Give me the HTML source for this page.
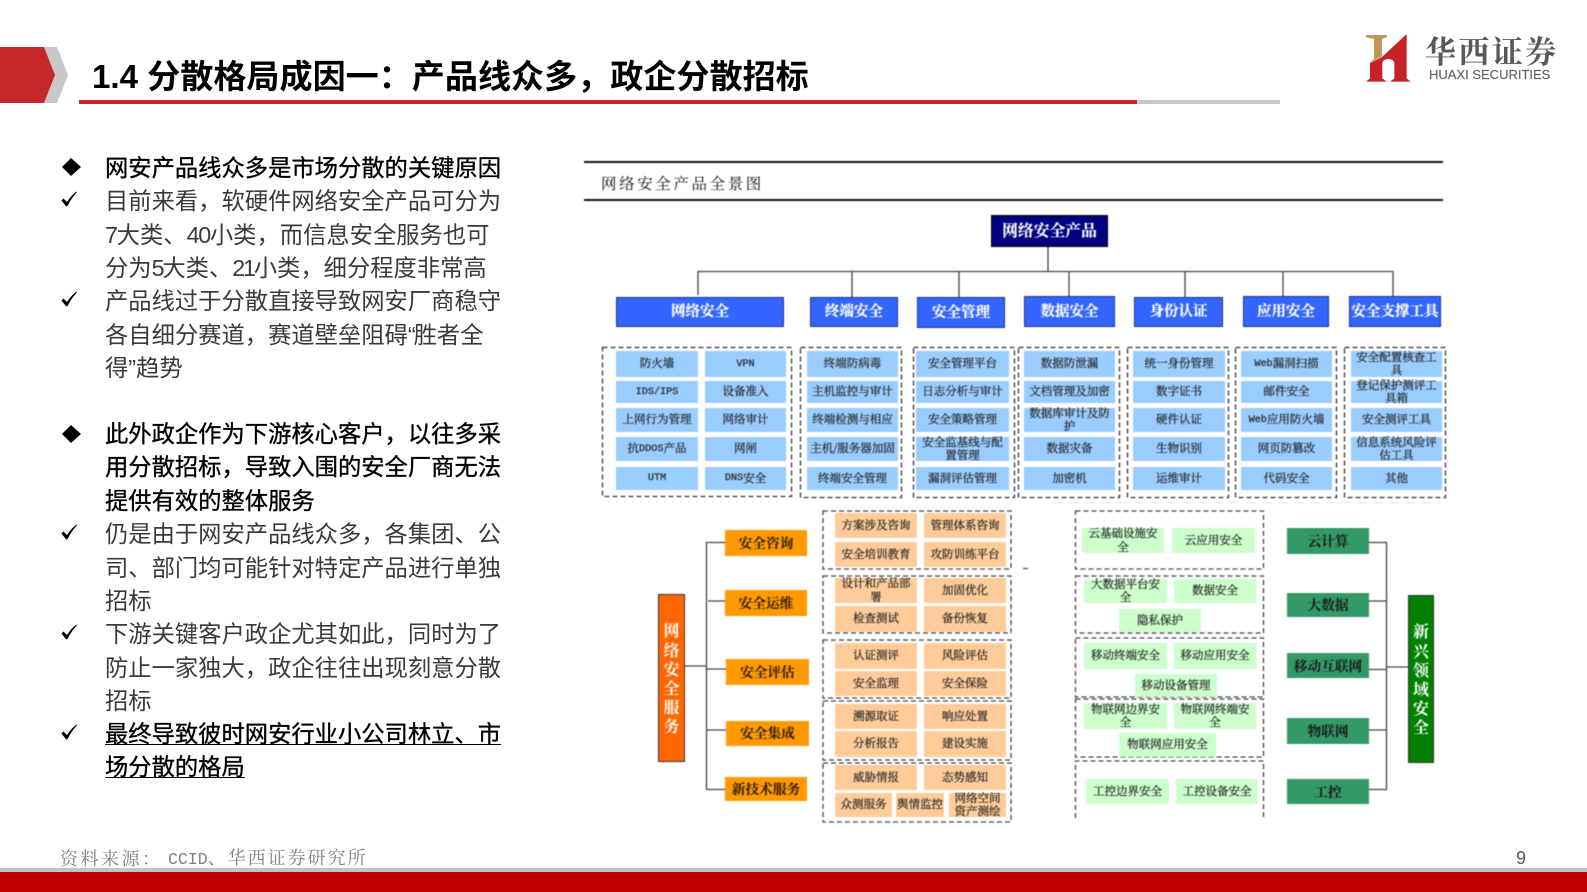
<!DOCTYPE html>
<html lang="zh-CN"><head><meta charset="utf-8"><title>1.4 分散格局成因一</title>
<style>
html,body{margin:0;padding:0;background:#fff}
#p{position:relative;width:1587px;height:892px;overflow:hidden;background:#fff;font-family:"Liberation Sans","Noto Sans CJK SC",sans-serif}
.a{position:absolute}
.l{position:absolute;left:105px;font-size:23.3px;line-height:33px;height:33px;white-space:nowrap;color:#3a3a3a}
.b{color:#000;-webkit-text-stroke:.35px #000}
#d{position:absolute;left:0;top:0;width:1587px;height:892px;filter:blur(.45px);font-family:"Liberation Mono","Noto Serif CJK SC",serif}
.c{position:absolute;display:flex;align-items:center;justify-content:center;text-align:center;font-size:11.5px;line-height:13.4px;color:#2a2a2a;-webkit-text-stroke:.25px #2a2a2a;white-space:nowrap;font-family:"Noto Serif CJK SC",serif}
.c i{font-style:normal;font-size:10.2px;font-family:"Liberation Mono",monospace;margin-top:1px}
.bl{background:#99ccff}.or{background:#ffcc99}.gr{background:#ccffcc}
.h{background:#3366ff;border:1px solid #1c2f8f;box-sizing:border-box;color:#fff;font-size:14.5px;font-weight:bold;-webkit-text-stroke:.2px #fff}
.o{background:#ff9900;font-size:13.7px;color:#2e2008;font-weight:bold;-webkit-text-stroke:.1px #2e2008}
.g{background:#339966;font-size:13.7px;color:#1c1c1c;font-weight:bold;-webkit-text-stroke:.1px #1c1c1c}
.v{color:#fff;font-size:16px;line-height:19.2px;white-space:normal;font-weight:bold;-webkit-text-stroke:0;box-sizing:border-box;border:1px solid #333}
.r1{top:351px;height:26px}.r2{top:381px;height:22px}.r3{top:408px;height:24px}.r4{top:437px;height:24px}.r5{top:467px;height:23px}
.c1{left:616px;width:82px}.c2{left:705px;width:81px}.c3{left:807px;width:91px}.c4{left:916px;width:93px}.c5{left:1024px;width:91px}.c6{left:1133px;width:92px}.c7{left:1241px;width:91px}.c8{left:1351px;width:91px}
.la{left:835px;width:82px}.lb{left:924px;width:82px}
.gdark{left:1287px;width:82px}
.d1{letter-spacing:-1.3px}.d2{letter-spacing:-2.2px}.q{letter-spacing:-2px}
</style></head><body><div id="p">

<!-- header -->
<svg class="a" style="left:0;top:0" width="1587" height="892">
<polygon points="44,47 57,47 68,75 57,103 44,103 55,75" fill="#c8c8c8"/>
<polygon points="0,47 44,47 55,75 44,103 0,103" fill="#c4282a"/>
<rect x="1137" y="100" width="143" height="4" fill="#c8c8c8"/>
<rect x="79" y="100" width="1058" height="4" fill="#c9272b"/>
<!-- bullets -->
<polygon points="71,158 81,167 71,176 62,167" fill="#000"/>
<polygon points="71,425 81,434 71,443 62,434" fill="#000"/>
<g fill="#000">
<path d="M61.5 200.5 L63.5 198.5 L67 202 C69.5 198 72.5 194.500 76.500 191.500 L77 192.300 C73 196.500 70 201 67.500 206.200 L66 206.200 Z"/>
<path d="M61.5 300.500 L63.5 298.500 L67 302 C69.500 298 72.500 294.500 76.500 291.500 L77 292.300 C73 296.500 70 301 67.500 306.200 L66 306.200 Z"/>
<path d="M61.5 533.500 L63.5 531.500 L67 535 C69.500 531 72.500 527.500 76.500 524.500 L77 525.300 C73 529.500 70 534 67.500 539.200 L66 539.200 Z"/>
<path d="M61.5 633.500 L63.5 631.500 L67 635 C69.500 631 72.500 627.500 76.500 624.500 L77 625.300 C73 629.500 70 634 67.500 639.200 L66 639.200 Z"/>
<path d="M61.5 733.500 L63.5 731.500 L67 735 C69.500 731 72.500 727.500 76.500 724.500 L77 725.300 C73 729.500 70 734 67.500 739.200 L66 739.200 Z"/>
</g>
<!-- footer -->
<rect x="0" y="868" width="1587" height="4" fill="#c4c4c4"/>
<rect x="0" y="872" width="1587" height="20" fill="#c00000"/>
</svg>

<div class="a" style="left:92px;top:56px;font-size:33.1px;line-height:44px;font-weight:bold;color:#000;white-space:nowrap">1.4 分散格局成因一：产品线众多，政企分散招标</div>

<!-- logo -->
<svg class="a" style="left:1150px;top:0" width="437" height="130" viewBox="0 0 1311 390">
<path d="M648 105 H711 V111 L696 117 V169 L660 188 L672 176 V117 L648 112 Z" fill="#bd9a5b"/>
<path d="M770 102 L696 171 L660 189 V235 L648 245 H710 L697 235 V192 Q697 177 715 177 Q733 177 733 192 V235 L720 245 H782 L770 235 Z" fill="#c52328"/>
</svg>
<div class="a" style="left:1425px;top:31px;font-size:31px;line-height:38px;letter-spacing:2.4px;color:#595959;font-weight:bold;white-space:nowrap;font-family:'Noto Serif CJK SC',serif;filter:blur(.3px)">华西证券</div>
<div class="a" style="left:1429px;top:67px;font-size:13px;line-height:16px;letter-spacing:0;color:#666;white-space:nowrap;-webkit-text-stroke:.2px #666">HUAXI SECURITIES</div>

<!-- body text -->
<div class="l b" style="top:152px">网安产品线众多是市场分散的关键原因</div>
<div class="l" style="top:185px">目前来看，软硬件网络安全产品可分为</div>
<div class="l" style="top:219px"><span class="d1">7</span>大类、<span class="d1">40</span>小类，而信息安全服务也可</div>
<div class="l" style="top:252px">分为<span class="d2">5</span>大类、<span class="d2">21</span>小类，细分程度非常高</div>
<div class="l" style="top:285px">产品线过于分散直接导致网安厂商稳守</div>
<div class="l" style="top:319px">各自细分赛道，赛道壁垒阻碍<span class="q">“</span>胜者全</div>
<div class="l" style="top:352px">得”趋势</div>
<div class="l b" style="top:418px">此外政企作为下游核心客户，以往多采</div>
<div class="l b" style="top:451px">用分散招标，导致入围的安全厂商无法</div>
<div class="l b" style="top:485px">提供有效的整体服务</div>
<div class="l" style="top:518px">仍是由于网安产品线众多，各集团、公</div>
<div class="l" style="top:552px">司、部门均可能针对特定产品进行单独</div>
<div class="l" style="top:585px">招标</div>
<div class="l" style="top:618px">下游关键客户政企尤其如此，同时为了</div>
<div class="l" style="top:652px">防止一家独大，政企往往出现刻意分散</div>
<div class="l" style="top:685px">招标</div>
<div class="l b" style="top:718px;text-decoration:underline;text-underline-offset:2px;text-decoration-thickness:1px">最终导致彼时网安行业小公司林立、市</div>
<div class="l b" style="top:751px;text-decoration:underline;text-underline-offset:2px;text-decoration-thickness:1px">场分散的格局</div>

<!-- footer text -->
<div class="a" style="left:60px;top:846px;font-family:'Noto Serif CJK SC',serif;font-size:18px;line-height:24px;letter-spacing:2.5px;color:#7f7f7f;white-space:nowrap">资料来源：</div>
<div class="a" style="left:168px;top:848px;font-family:'Liberation Mono','Noto Serif CJK SC',serif;font-size:16.500px;line-height:24px;color:#7f7f7f;white-space:nowrap">CCID<span style="font-size:18px;letter-spacing:2px">、华西证券研究所</span></div>
<div class="a" style="left:1516px;top:847px;font-size:18px;line-height:22px;color:#595959">9</div>

<!-- diagram -->
<div id="d">
<svg class="a" style="left:0;top:0" width="1587" height="892" fill="none">
<rect x="584" y="161" width="859" height="2" fill="#111"/>
<rect x="584" y="199" width="859" height="2" fill="#111"/>
<g stroke="#444" stroke-width="1.300">
<path d="M1048 247V272M698 295V271.500H1393V296M852 272V297M959 272V297M1069 272V296M1185 272V297M1283 272V296"/>
</g>
<g stroke="#333" stroke-width="1.300" stroke-dasharray="5 3">
<rect x="602.500" y="347.500" width="189" height="149"/>
<rect x="800.500" y="347.500" width="101" height="150"/>
<rect x="913.500" y="347.500" width="101" height="150"/>
<rect x="1018.500" y="347.500" width="101" height="150"/>
<rect x="1127.500" y="347.500" width="101" height="150"/>
<rect x="1235.500" y="347.500" width="101" height="150"/>
<rect x="1344.500" y="347.500" width="101" height="150"/>
</g>
<g stroke="#444" stroke-width="1.300" stroke-dasharray="5 3">
<rect x="823" y="511" width="188" height="58"/>
<rect x="823" y="576" width="188" height="57"/>
<rect x="823" y="640" width="188" height="58"/>
<rect x="823" y="701" width="188" height="59"/>
<rect x="823" y="763" width="188" height="59"/>
<rect x="1075.500" y="511" width="188" height="58"/>
<rect x="1075.500" y="576" width="188" height="57"/>
<rect x="1075.500" y="638" width="188" height="59"/>
<rect x="1075.500" y="699" width="188" height="58"/>
<path d="M1075.500 818V761H1263.500V818"/>
</g>
<path d="M1054 502.500H1440" stroke="#fbdcdc" stroke-width="1.200" stroke-dasharray="9 7"/>
<path d="M1023 568.500H1028" stroke="#555" stroke-width="1.300"/>
<g stroke="#444" stroke-width="1.300">
<path d="M726 542.500H706.500V789.500H726M708 601H725M706 669H726M706 730H726M685 666H706"/>
<path d="M1367 542.500H1386.500V789.500H1367M1369 601H1386M1367 669.500H1387M1369 730H1387M1387 667H1408"/>
</g>
</svg>

<div class="a" style="left:601px;top:171px;font-family:'Noto Serif CJK SC',serif;font-size:15.500px;line-height:24px;letter-spacing:2.600px;color:#111;white-space:nowrap">网络安全产品全景图</div>

<div class="c" style="left:991px;top:215px;width:117px;height:32px;background:#000080;border:1px solid #000;box-sizing:border-box;color:#fff;font-size:15.800px;font-weight:bold;-webkit-text-stroke:.15px #fff;padding-bottom:2px">网络安全产品</div>

<div class="c h" style="left:616px;top:297px;width:168px;height:30px;padding-bottom:2px">网络安全</div>
<div class="c h" style="left:810px;top:297px;width:88px;height:30px;padding-bottom:2px">终端安全</div>
<div class="c h" style="left:917px;top:297px;width:88px;height:31px;padding-bottom:1px">安全管理</div>
<div class="c h" style="left:1024px;top:296px;width:91px;height:31px;padding-bottom:2px">数据安全</div>
<div class="c h" style="left:1134px;top:297px;width:89px;height:30px;padding-bottom:2px">身份认证</div>
<div class="c h" style="left:1243px;top:296px;width:86px;height:31px;padding-bottom:2px">应用安全</div>
<div class="c h" style="left:1349px;top:296px;width:92px;height:31px;padding-bottom:2px">安全支撑工具</div>

<div class="c bl c1 r1">防火墙</div><div class="c bl c2 r1"><i>VPN</i></div>
<div class="c bl c1 r2"><i>IDS/IPS</i></div><div class="c bl c2 r2">设备准入</div>
<div class="c bl c1 r3">上网行为管理</div><div class="c bl c2 r3">网络审计</div>
<div class="c bl c1 r4">抗<i>DDOS</i>产品</div><div class="c bl c2 r4">网闸</div>
<div class="c bl c1 r5"><i>UTM</i></div><div class="c bl c2 r5"><i>DNS</i>安全</div>

<div class="c bl c3 r1">终端防病毒</div><div class="c bl c3 r2">主机监控与审计</div><div class="c bl c3 r3">终端检测与相应</div><div class="c bl c3 r4">主机/服务器加固</div><div class="c bl c3 r5">终端安全管理</div>
<div class="c bl c4 r1">安全管理平台</div><div class="c bl c4 r2">日志分析与审计</div><div class="c bl c4 r3">安全策略管理</div><div class="c bl c4 r4">安全监基线与配<br>置管理</div><div class="c bl c4 r5">漏洞评估管理</div>
<div class="c bl c5 r1">数据防泄漏</div><div class="c bl c5 r2">文档管理及加密</div><div class="c bl c5 r3">数据库审计及防<br>护</div><div class="c bl c5 r4">数据灾备</div><div class="c bl c5 r5">加密机</div>
<div class="c bl c6 r1">统一身份管理</div><div class="c bl c6 r2">数字证书</div><div class="c bl c6 r3">硬件认证</div><div class="c bl c6 r4">生物识别</div><div class="c bl c6 r5">运维审计</div>
<div class="c bl c7 r1"><i>Web</i>漏洞扫描</div><div class="c bl c7 r2">邮件安全</div><div class="c bl c7 r3"><i>Web</i>应用防火墙</div><div class="c bl c7 r4">网页防篡改</div><div class="c bl c7 r5">代码安全</div>
<div class="c bl c8 r1">安全配置核查工<br>具</div><div class="c bl c8 r2">登记保护测评工<br>具箱</div><div class="c bl c8 r3">安全测评工具</div><div class="c bl c8 r4">信息系统风险评<br>估工具</div><div class="c bl c8 r5">其他</div>

<!-- services -->
<div class="c v" style="left:658px;top:594px;width:27px;height:168px;background:#ff6600">网<br>络<br>安<br>全<br>服<br>务</div>
<div class="c o" style="left:725px;top:530px;width:82px;height:25px;padding-bottom:1px">安全咨询</div>
<div class="c o" style="left:725px;top:590px;width:82px;height:26px">安全运维</div>
<div class="c o" style="left:726px;top:659px;width:83px;height:26px">安全评估</div>
<div class="c o" style="left:726px;top:721px;width:83px;height:24px;padding-bottom:1px">安全集成</div>
<div class="c o" style="left:725px;top:777px;width:82px;height:24px">新技术服务</div>

<div class="c or la" style="top:513px;height:25px">方案涉及咨询</div><div class="c or lb" style="top:513px;height:25px">管理体系咨询</div>
<div class="c or la" style="top:542px;height:25px">安全培训教育</div><div class="c or lb" style="top:542px;height:25px">攻防训练平台</div>
<div class="c or la" style="top:578px;height:25px">设计和产品部<br>署</div><div class="c or lb" style="top:578px;height:25px">加固优化</div>
<div class="c or la" style="top:606px;height:26px">检查测试</div><div class="c or lb" style="top:606px;height:26px">备份恢复</div>
<div class="c or la" style="top:643px;height:26px">认证测评</div><div class="c or lb" style="top:643px;height:26px">风险评估</div>
<div class="c or la" style="top:671px;height:25px">安全监理</div><div class="c or lb" style="top:671px;height:25px">安全保险</div>
<div class="c or la" style="top:704px;height:25px">溯源取证</div><div class="c or lb" style="top:704px;height:25px">响应处置</div>
<div class="c or la" style="top:731px;height:26px">分析报告</div><div class="c or lb" style="top:731px;height:26px">建设实施</div>
<div class="c or la" style="top:765px;height:25px">威胁情报</div><div class="c or lb" style="top:765px;height:25px">态势感知</div>
<div class="c or" style="left:835px;top:793px;width:57px;height:24px">众测服务</div>
<div class="c or" style="left:896px;top:793px;width:48px;height:24px">舆情监控</div>
<div class="c or" style="left:949px;top:793px;width:57px;height:24px">网络空间<br>资产测绘</div>

<!-- emerging -->
<div class="c gr" style="left:1082px;top:528px;width:82px;height:25px">云基础设施安<br>全</div>
<div class="c gr" style="left:1172px;top:528px;width:83px;height:25px">云应用安全</div>
<div class="c gr" style="left:1084px;top:579px;width:83px;height:24px">大数据平台安<br>全</div>
<div class="c gr" style="left:1174px;top:579px;width:82px;height:24px">数据安全</div>
<div class="c gr" style="left:1119px;top:609px;width:82px;height:23px">隐私保护</div>
<div class="c gr" style="left:1084px;top:643px;width:83px;height:26px">移动终端安全</div>
<div class="c gr" style="left:1174px;top:643px;width:82px;height:26px">移动应用安全</div>
<div class="c gr" style="left:1135px;top:674px;width:82px;height:23px">移动设备管理</div>
<div class="c gr" style="left:1084px;top:703px;width:83px;height:26px">物联网边界安<br>全</div>
<div class="c gr" style="left:1174px;top:703px;width:82px;height:26px">物联网终端安<br>全</div>
<div class="c gr" style="left:1119px;top:733px;width:97px;height:24px">物联网应用安全</div>
<div class="c gr" style="left:1086px;top:779px;width:83px;height:25px">工控边界安全</div>
<div class="c gr" style="left:1176px;top:779px;width:82px;height:25px">工控设备安全</div>

<div class="c g gdark" style="top:528px;height:25px;padding-bottom:1px">云计算</div>
<div class="c g gdark" style="top:593px;height:24px">大数据</div>
<div class="c g gdark" style="top:653px;height:25px">移动互联网</div>
<div class="c g gdark" style="top:718px;height:25px;padding-bottom:1px">物联网</div>
<div class="c g gdark" style="top:779px;height:25px">工控</div>
<div class="c v" style="left:1408px;top:595px;width:26px;height:168px;background:#008000">新<br>兴<br>领<br>域<br>安<br>全</div>
</div>
</div></body></html>
